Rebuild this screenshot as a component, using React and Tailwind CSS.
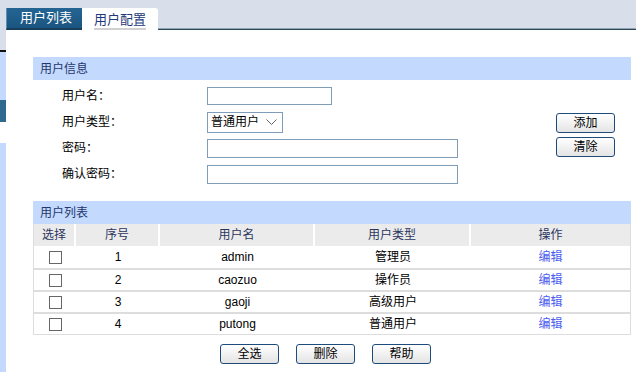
import React from 'react'

const users = [
  { id: 1, name: 'admin', type: '管理员' },
  { id: 2, name: 'caozuo', type: '操作员' },
  { id: 3, name: 'gaoji', type: '高级用户' },
  { id: 4, name: 'putong', type: '普通用户' },
]

function Btn({ children }) {
  return (
    <button className="w-[59px] h-[20px] rounded-[3px] border border-[#1d4c7c] bg-gradient-to-b from-white to-[#e4e4e4] text-[12px] leading-none text-black">
      {children}
    </button>
  )
}

function SectionHead({ children }) {
  return (
    <div className="h-[23px] bg-[#c3d9fd] pl-[7px] flex items-center text-[12px] text-[#23376e]">{children}</div>
  )
}

function Row({ label, children }) {
  return (
    <div className="h-[26px] flex items-center">
      <div className="w-[174px] pl-[29px] text-[12px] text-black">{label}</div>
      {children}
    </div>
  )
}

export default function App() {
  return (
    <div className="w-[636px] h-[372px] bg-[#d9dfea] flex overflow-hidden" style={{ fontFamily: '"Liberation Sans", "Noto Sans CJK SC", sans-serif' }}>
      {/* side strip */}
      <div className="w-[6px] flex flex-col shrink-0">
        <div className="h-[50px] bg-[#d9dfea]" />
        <div className="h-[2px] bg-[#111]" />
        <div className="h-[48px] bg-[#c3d9fd]" />
        <div className="h-[22px] bg-[#2f6a8e]" />
        <div className="h-[21px] bg-white" />
        <div className="flex-1 bg-[#c3d9fd]" />
      </div>

      <div className="flex-1 flex flex-col">
        {/* tabs */}
        <div className="h-[30px] flex items-end">
          <div className="w-[76px] h-[22px] bg-gradient-to-b from-[#256593] to-[#1a5580] border-l border-[#5d8fb3] border-b-2 border-b-[#173f5c] flex items-center pl-[13px] text-[13px] text-white">
            用户列表
          </div>
          <div className="w-[76px] h-[22px] bg-white rounded-tr-[3px] flex items-center justify-center">
            <span className="text-[13px] text-[#1f3a7a] border-b-2 border-[#d0d0d0] leading-[17px] mt-[2px]">用户配置</span>
          </div>
          <div className="flex-1 h-[2px] bg-[#2d4755] border-t border-[#8fa7b5]" />
        </div>

        {/* content */}
        <div className="flex-1 bg-white pl-[27px] pr-[5px] pt-[27px]">
          <SectionHead>用户信息</SectionHead>
          <div className="flex pt-[3px]">
            <div className="flex-1 flex flex-col">
              <Row label="用户名：">
                <input className="w-[125px] h-[18px] border border-[#7f9db9] outline-none" />
              </Row>
              <Row label="用户类型：">
                <div className="w-[76px] h-[21px] border border-[#7f9db9] flex items-center pl-[3px] text-[12px] text-black">
                  <span>普通用户</span>
                  <svg className="ml-[7px]" width="11" height="6" viewBox="0 0 11 6">
                    <path d="M0.5 0.5 L5.5 5.5 L10.5 0.5" fill="none" stroke="#666" strokeWidth="1" />
                  </svg>
                </div>
              </Row>
              <Row label="密码：">
                <input type="password" className="w-[251px] h-[19px] border border-[#7f9db9] outline-none" />
              </Row>
              <Row label="确认密码：">
                <input type="password" className="w-[251px] h-[19px] border border-[#7f9db9] outline-none" />
              </Row>
            </div>
            <div className="flex flex-col justify-center gap-[4px] pr-[16px]">
              <Btn>添加</Btn>
              <Btn>清除</Btn>
            </div>
          </div>

          <div className="mt-[14px]">
            <SectionHead>用户列表</SectionHead>
            <div className="border-x border-b border-[#dddddd] text-[12px]">
              <div className="h-[22px] flex bg-[#ebebeb] text-[#2a3560]">
                <div className="w-[42px] flex items-center justify-center border-r-2 border-white">选择</div>
                <div className="w-[84px] flex items-center justify-center border-r-2 border-white">序号</div>
                <div className="w-[155px] flex items-center justify-center border-r-2 border-white">用户名</div>
                <div className="w-[156px] flex items-center justify-center border-r-2 border-white">用户类型</div>
                <div className="flex-1 flex items-center justify-center">操作</div>
              </div>
              {users.map((u, i) => (
                <div key={u.id} className={`h-[22px] flex text-black ${i > 0 ? 'border-t-2 border-[#dddddd]' : ''}`}>
                  <div className="w-[42px] flex items-center justify-center">
                    <div className="w-[13px] h-[13px] border border-[#666] bg-white" />
                  </div>
                  <div className="w-[84px] flex items-center justify-center">{u.id}</div>
                  <div className="w-[155px] flex items-center justify-center">{u.name}</div>
                  <div className="w-[156px] flex items-center justify-center">{u.type}</div>
                  <div className="flex-1 flex items-center justify-center text-[#4a5cf0]">编辑</div>
                </div>
              ))}
            </div>
            <div className="flex gap-[17px] pl-[187px] pt-[9px]">
              <Btn>全选</Btn>
              <Btn>删除</Btn>
              <Btn>帮助</Btn>
            </div>
          </div>
        </div>
      </div>
    </div>
  )
}
